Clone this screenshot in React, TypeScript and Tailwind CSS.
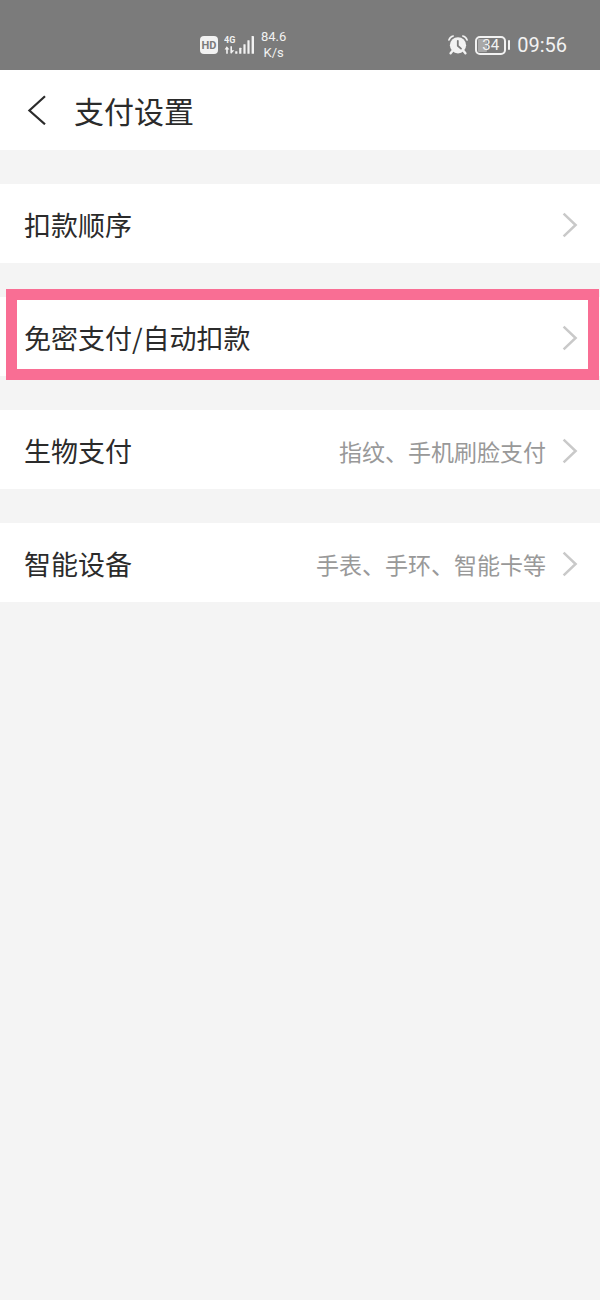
import React from 'react';

interface SettingItem {
  label: string;
  value?: string;
  highlighted?: boolean;
}

const settings: SettingItem[] = [
  { label: '扣款顺序' },
  { label: '免密支付/自动扣款', highlighted: true },
  { label: '生物支付', value: '指纹、手机刷脸支付' },
  { label: '智能设备', value: '手表、手环、智能卡等' },
];

const SignalIcon: React.FC = () => (
  <svg width="31" height="20" viewBox="0 0 31 20" fill="#f2f2f2" aria-hidden="true">
    <text x="0" y="8" fontSize="9" fontWeight="700" fontFamily="'Roboto', sans-serif">4G</text>
    <path d="M2.8 11.2 L5.4 14.4 H3.8 V18.8 H2.2 V14.4 H0.6 Z" />
    <path d="M6.4 11.2 H8 V15.2 H10.4 L7.2 18.8 L6.4 18 Z" />
    <rect x="11.2" y="16.2" width="2.2" height="2.6" rx="0.4" />
    <rect x="15.2" y="12.8" width="2.2" height="6" rx="0.4" />
    <rect x="19.4" y="9.2" width="2.2" height="9.6" rx="0.4" />
    <rect x="23.4" y="5.2" width="2.2" height="13.6" rx="0.4" />
    <rect x="27.6" y="1" width="2.4" height="17.8" rx="0.4" />
  </svg>
);

const AlarmIcon: React.FC = () => (
  <svg width="20" height="20" viewBox="0 0 20 20" fill="none" aria-hidden="true">
    <circle cx="10" cy="10.3" r="8.1" fill="#f2f2f2" />
    <path d="M0.9 5 C1.7 2.8 3.1 1.5 5.2 1 M19.1 5 C18.3 2.8 16.9 1.5 14.8 1" stroke="#f2f2f2" strokeWidth="1.6" strokeLinecap="round" />
    <path d="M4.4 16 L2.6 18.2 M15.6 16 L17.4 18.2" stroke="#f2f2f2" strokeWidth="2.4" strokeLinecap="round" />
    <path d="M9.8 5.8 V10.8 L13 13.6" stroke="#7b7b7b" strokeWidth="1.8" strokeLinecap="round" strokeLinejoin="round" />
  </svg>
);

const Battery: React.FC<{ level: number }> = ({ level }) => (
  <div className="flex items-center gap-0.5">
    <div className="flex h-[19px] w-[31px] rounded-[5px] border-2 border-[#f2f2f2] p-px">
      <div className="relative flex flex-1 items-center justify-center">
        <div className="absolute inset-y-0 left-0 rounded-[1px] bg-[#a8a8a8]" style={{ width: `${level}%` }} />
        <span className="relative text-[15px] leading-none">{level}</span>
      </div>
    </div>
    <div className="h-2.5 w-0.5 rounded-full bg-[#f2f2f2]" />
  </div>
);

const StatusBar: React.FC = () => (
  <div className="flex h-[70px] items-center justify-between bg-[#7b7b7b] pt-5 pr-[33px] pl-[200px] font-['Roboto',sans-serif] text-[#f2f2f2]">
    <div className="flex items-center gap-1.5">
      <span className="flex h-[18px] w-[18px] items-center justify-center rounded-[4px] bg-[#f2f2f2] text-[11px] leading-none font-bold text-[#7b7b7b]">
        HD
      </span>
      <SignalIcon />
      <div className="text-center text-[13px] leading-4">
        <div>84.6</div>
        <div>K/s</div>
      </div>
    </div>
    <div className="flex items-center gap-[7px]">
      <AlarmIcon />
      <Battery level={34} />
      <span className="text-[20px] leading-6">09:56</span>
    </div>
  </div>
);

const Header: React.FC = () => (
  <header className="flex h-20 items-center gap-6 bg-white px-6">
    <button type="button" aria-label="返回" className="flex w-[26px] justify-center">
      <svg width="20" height="30" viewBox="0 0 20 30" fill="none" aria-hidden="true">
        <path d="M18 1.2 L2.4 15.5 L18 29.3" stroke="#2b2b2b" strokeWidth="2.2" />
      </svg>
    </button>
    <h1 className="text-[30px] leading-10">支付设置</h1>
  </header>
);

const SettingRow: React.FC<{ item: SettingItem }> = ({ item }) => (
  <li className="relative">
    <button
      type="button"
      className="flex h-[79px] w-full items-center bg-white pt-0.5 pr-[22px] pl-6 text-left"
    >
      <span className="text-[27px] leading-9">{item.label}</span>
      <span className="ml-auto text-[23px] leading-9 text-[#999999]">{item.value}</span>
      <svg width="16" height="26" viewBox="0 0 16 26" fill="none" className="ml-4 shrink-0" aria-hidden="true">
        <path d="M1.6 1.6 L13.6 13 L1.6 24.4" stroke="#c9c9c9" strokeWidth="2.5" />
      </svg>
    </button>
    {item.highlighted && (
      <div className="pointer-events-none absolute -top-2 right-px -bottom-1 left-1.5 border-[11px] border-[#f96e94]" />
    )}
  </li>
);

export default function App() {
  return (
    <div className="min-h-screen bg-[#f4f4f4] font-['Noto_Sans_CJK_SC',sans-serif] text-[#2b2b2b]">
      <StatusBar />
      <Header />
      <main className="py-[34px]">
        <ul className="flex flex-col gap-[34px]">
          {settings.map((item) => (
            <SettingRow key={item.label} item={item} />
          ))}
        </ul>
      </main>
    </div>
  );
}
